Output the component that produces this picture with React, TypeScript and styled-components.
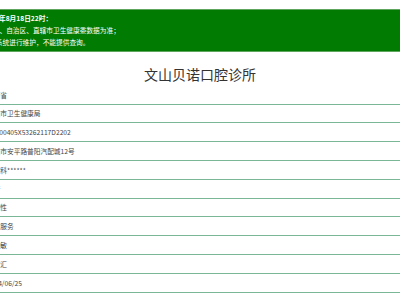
import React from 'react'
import styled, { createGlobalStyle } from 'styled-components'

const GlobalStyle = createGlobalStyle`
  html, body {
    margin: 0;
    padding: 0;
    background: #fff;
    overflow: hidden;
  }
  body {
    font-family: "Noto Sans CJK SC", "Noto Sans", sans-serif;
  }
`

const Page = styled.div`
  width: 400px;
  padding-top: 9px;
  overflow: hidden;
`

const Notice = styled.div`
  background: #017b01;
  border-top: 1px solid #5ea65e;
  border-bottom: 1px solid #5ea65e;
  padding: 2px 0 3px;
  color: #fff;
  font-size: 6.7px;
  line-height: 12px;
`

const NoticeLine = styled.div<{ $lead: number; $bold?: boolean }>`
  white-space: nowrap;
  margin-left: ${p => -p.$lead}px;
  font-weight: ${p => (p.$bold ? 700 : 400)};
`

const Title = styled.h1`
  margin: 0;
  padding: 11.5px 0 2.3px;
  text-align: center;
  font-size: 14px;
  line-height: 20px;
  font-weight: 400;
  color: #333;
`

const InfoTable = styled.div`
  margin-left: -133px;
`

const InfoRow = styled.div`
  display: grid;
  grid-template-columns: 120px 1fr;
  align-items: center;
  height: 18.8px;
  box-sizing: border-box;
  border-bottom: 1px solid #79b796;
  font-size: 6.7px;
  color: #444;
  white-space: nowrap;
`

const Label = styled.span`
  text-align: right;
  color: #666;
`

const Value = styled.span``

const rows = [
  { label: '所在省份', value: '云南省' },
  { label: '登记机关', value: '文山市卫生健康局' },
  { label: '登记号', value: 'PDY00405X53262117D2202' },
  { label: '地址', value: '文山市安平路普阳汽配城12号' },
  { label: '诊疗科目', value: '口腔科******' },
  { label: '机构类别', value: '诊所' },
  { label: '经营性质', value: '营利性' },
  { label: '服务对象', value: '医疗服务' },
  { label: '负责人', value: '王晓敏' },
  { label: '法定代表人', value: '李文汇' },
  { label: '有效期限', value: '2024/06/25' },
]

export default function App() {
  return (
    <Page>
      <GlobalStyle />
      <Notice>
        <NoticeLine $lead={30.2} $bold>截至2024年8月18日22时：</NoticeLine>
        <NoticeLine $lead={20.6}>以各省、自治区、直辖市卫生健康委数据为准；</NoticeLine>
        <NoticeLine $lead={17.5}>如遇系统进行维护，不能提供查询。</NoticeLine>
      </Notice>
      <Title>文山贝诺口腔诊所</Title>
      <InfoTable>
        {rows.map(r => (
          <InfoRow key={r.label}>
            <Label>{r.label}：</Label>
            <Value>{r.value}</Value>
          </InfoRow>
        ))}
      </InfoTable>
    </Page>
  )
}
